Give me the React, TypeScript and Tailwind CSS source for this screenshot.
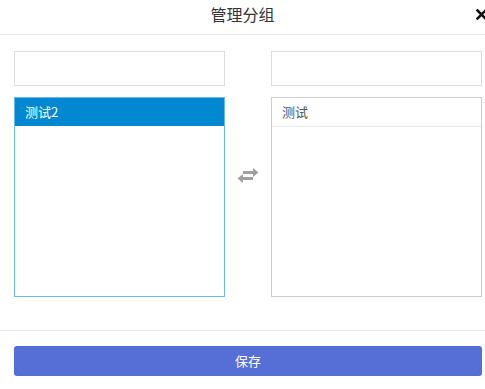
import React from "react";

export default function App() {
  return (
    <div
      className="w-[485px] h-[389px] bg-white overflow-hidden relative"
      style={{ fontFamily: '"Noto Sans CJK SC", "Noto Sans", sans-serif' }}
    >
      <div className="h-[35px] border-b border-[#e5e5e5] flex items-center justify-center relative">
        <span className="text-[16px] text-[#333] leading-none -mt-[6px]">管理分组</span>
        <svg
          className="absolute left-[476px] top-[9px]"
          width="11"
          height="11"
          viewBox="0 0 11 11"
        >
          <path d="M1.5 1.5 L9.5 9.5 M9.5 1.5 L1.5 9.5" stroke="#111" strokeWidth="2.6" strokeLinecap="square" />
        </svg>
      </div>
      <div className="pl-[14px] pr-[3px] pt-[16px] flex h-[296px] border-b border-[#e5e5e5]">
        <div className="w-[211px] flex flex-col gap-[11px]">
          <div className="h-[35px] border border-[#dcdcdc] bg-white" />
          <div className="h-[200px] border border-[#6ab8f2]">
            <div className="h-[28px] bg-[#0288d1] text-white text-[13px] flex items-center pl-[10px]">
              测试2
            </div>
          </div>
        </div>
        <div className="w-[46px] flex items-start justify-center pt-[117px]">
          <svg width="22" height="15" viewBox="0 0 22 15">
            <path d="M6 3 H16 V0 L21.5 4.5 L16 9 V6 H6 Z" fill="#a0a0a0" />
            <path d="M16 9 H6 V6 L0.5 10.5 L6 15 V12 H16 Z" fill="#a0a0a0" />
          </svg>
        </div>
        <div className="w-[211px] flex flex-col gap-[11px]">
          <div className="h-[35px] border border-[#dcdcdc] bg-white" />
          <div className="h-[200px] border border-[#cccccc]">
            <div className="h-[29px] border-b border-[#ebebeb] text-[#555] text-[13px] flex items-center pl-[10px]">
              测试
            </div>
          </div>
        </div>
      </div>
      <div className="pl-[14px] pr-[3px] pt-[15px]">
        <button className="w-full h-[30px] rounded-[3px] bg-[#566fd6] text-white text-[13px] flex items-center justify-center">
          保存
        </button>
      </div>
    </div>
  );
}
